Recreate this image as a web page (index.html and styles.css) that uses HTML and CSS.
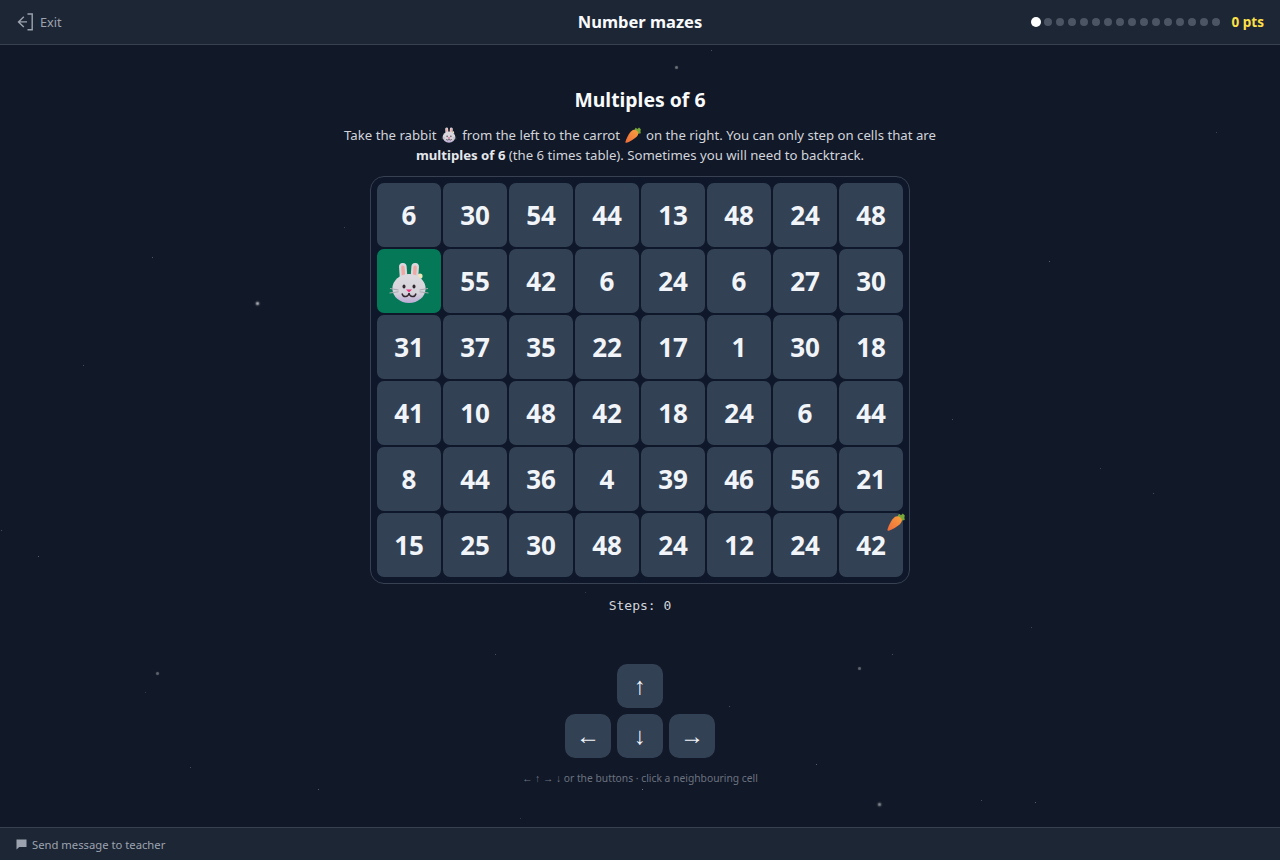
FILE: index.html
```html
<!DOCTYPE html>
<html lang="en">
<head>
<meta charset="utf-8">
<title>Number mazes</title>
<link rel="stylesheet" href="styles.css">
</head>
<body>
<svg class="defs" width="0" height="0" aria-hidden="true">
  <defs>
    <linearGradient id="face" x1="0" y1="0" x2="0" y2="1">
      <stop offset="0" stop-color="#dddbe0"/>
      <stop offset=".65" stop-color="#d6d3da"/>
      <stop offset="1" stop-color="#bcaad6"/>
    </linearGradient>
    <linearGradient id="root" x1="0" y1="1" x2="1" y2="0">
      <stop offset="0" stop-color="#ee6a3a"/>
      <stop offset="1" stop-color="#f8a03f"/>
    </linearGradient>
    <symbol id="rabbit" viewBox="0 0 40 42">
      <circle cx="31" cy="14" r="2.6" fill="#f1e6b8"/>
      <rect x="10.400" y="1" width="7.6" height="19" rx="3.8" fill="#dad8de" transform="rotate(-4 14 10)"/>
      <rect x="22" y="1" width="7.6" height="19" rx="3.8" fill="#dad8de" transform="rotate(4 26 10)"/>
      <rect x="12.500" y="3.600" width="3.4" height="14" rx="1.7" fill="#f0a8a2" transform="rotate(-4 14 10)"/>
      <rect x="24.100" y="3.600" width="3.4" height="14" rx="1.7" fill="#f0a8a2" transform="rotate(4 26 10)"/>
      <ellipse cx="20" cy="26.500" rx="16.600" ry="14.600" fill="url(#face)"/>
      <path d="M1 26.500l8.500 1.500M.5 31l9-1.200M39 26.500l-8.500 1.500M39.500 31l-9-1.200" stroke="#a9a8b2" stroke-width="1" fill="none"/>
      <ellipse cx="15" cy="24.500" rx="1.500" ry="2.100" fill="#33272e"/>
      <ellipse cx="25" cy="24.500" rx="1.500" ry="2.100" fill="#33272e"/>
      <path d="M17 27.600h6l-3 3z" fill="#ee2f7c"/>
      <path d="M13 31.500q1 3.600 4 3q2.600-.4 3-3.500q.4 3.100 3 3.500q3 .6 4-3" fill="none" stroke="#33272e" stroke-width="1.500"/>
    </symbol>
    <symbol id="carrot" viewBox="0 0 18 18">
      <path d="M10.500 3.500 12 .8l2 1.400L15.800.6l2 1.900-.4 2.300.4 2.200-2.500.6L12 8z" fill="#77a63a"/>
      <path d="M8 3.800C10.200 2.400 13.500 3.600 14.600 6 15.400 8 14.400 9.800 12.800 11.300 9.800 14 4.600 17 1.800 17.800 .8 18 .3 17.500.5 16.500 1.200 13.500 4.600 6.300 8 3.800Z" fill="url(#root)"/>
    </symbol>
  </defs>
</svg>
<div class="stars"></div>
<div class="app">
  <header class="topbar">
    <div class="exit">
      <svg class="exit-icon" width="17" height="18" viewBox="0 0 17 18" fill="none" stroke="currentColor" stroke-width="1.4"><path d="M11.500 1h4.700v15.800h-4.700"/><path d="M11 8.900H2.500M7.800 3.800 2.500 8.900l5.300 5.100"/></svg>
      <span>Exit</span>
    </div>
    <div class="title">Number mazes</div>
    <div class="progress">
      <div class="dots">
        <i class="dot now"></i><i class="dot"></i><i class="dot"></i><i class="dot"></i><i class="dot"></i><i class="dot"></i><i class="dot"></i><i class="dot"></i><i class="dot"></i><i class="dot"></i><i class="dot"></i><i class="dot"></i><i class="dot"></i><i class="dot"></i><i class="dot"></i><i class="dot"></i>
      </div>
      <span class="pts">0 pts</span>
    </div>
  </header>
  <main class="main">
    <h1>Multiples of 6</h1>
    <p class="lead">Take the rabbit <svg class="inline-icon" aria-label="rabbit"><use href="#rabbit"/></svg> from the left to the carrot <svg class="inline-icon" aria-label="carrot"><use href="#carrot"/></svg> on the right. You can only step on cells that are <b>multiples of 6</b> (the 6 times table). Sometimes you will need to backtrack.</p>
    <div class="board">
      <div class="cell">6</div><div class="cell">30</div><div class="cell">54</div><div class="cell">44</div><div class="cell">13</div><div class="cell">48</div><div class="cell">24</div><div class="cell">48</div>
      <div class="cell start"><svg class="rabbit" aria-label="rabbit"><use href="#rabbit"/></svg></div><div class="cell">55</div><div class="cell">42</div><div class="cell">6</div><div class="cell">24</div><div class="cell">6</div><div class="cell">27</div><div class="cell">30</div>
      <div class="cell">31</div><div class="cell">37</div><div class="cell">35</div><div class="cell">22</div><div class="cell">17</div><div class="cell">1</div><div class="cell">30</div><div class="cell">18</div>
      <div class="cell">41</div><div class="cell">10</div><div class="cell">48</div><div class="cell">42</div><div class="cell">18</div><div class="cell">24</div><div class="cell">6</div><div class="cell">44</div>
      <div class="cell">8</div><div class="cell">44</div><div class="cell">36</div><div class="cell">4</div><div class="cell">39</div><div class="cell">46</div><div class="cell">56</div><div class="cell">21</div>
      <div class="cell">15</div><div class="cell">25</div><div class="cell">30</div><div class="cell">48</div><div class="cell">24</div><div class="cell">12</div><div class="cell">24</div><div class="cell goal">42<svg class="carrot" aria-label="carrot"><use href="#carrot"/></svg></div>
    </div>
    <div class="steps">Steps: 0</div>
    <div class="pad">
      <button class="key k-up">↑</button>
      <button class="key k-left">←</button>
      <button class="key k-down">↓</button>
      <button class="key k-right">→</button>
    </div>
    <p class="hint">← ↑ → ↓ or the buttons · click a neighbouring cell</p>
  </main>
  <footer class="footer">
    <svg width="11" height="11" viewBox="0 0 11 11" fill="currentColor"><path d="M0.5 0.5h10v7.6H3.2L0.5 10.5z"/></svg>
    <span>Send message to teacher</span>
  </footer>
</div>
</body>
</html>
```
FILE: styles.css
```css
* { box-sizing: border-box; }
html, body { margin: 0; height: 100%; }
body {
  background: #111827;
  color: #e2e8f0;
  font-family: "Noto Sans", "Liberation Sans", sans-serif;
  overflow: hidden;
  position: relative;
}
.defs { position: absolute; }
.stars {
  position: absolute;
  left: 0; top: 0;
  width: 1px; height: 1px;
  border-radius: 50%;
  background: transparent;
  box-shadow:
    676px 67px 1px 1px rgba(255,255,255,.4),
    257px 303px 2px 1px rgba(255,255,255,.85),
    157px 673px 1px 1px rgba(255,255,255,.35),
    859px 668px 1px 1px rgba(255,255,255,.35),
    879px 804px 2px 1px rgba(255,255,255,.65),
    711px 50px 0 0 rgba(255,255,255,.3),
    152px 257px 0 0 rgba(255,255,255,.35),
    344px 227px 0 0 rgba(255,255,255,.25),
    83px 365px 0 0 rgba(255,255,255,.3),
    1049px 261px 0 0 rgba(255,255,255,.4),
    1216px 132px 0 0 rgba(255,255,255,.25),
    1100px 468px 0 0 rgba(255,255,255,.25),
    1153px 493px 0 0 rgba(255,255,255,.3),
    952px 419px 0 0 rgba(255,255,255,.3),
    1px 530px 0 0 rgba(255,255,255,.3),
    38px 556px 0 0 rgba(255,255,255,.4),
    145px 692px 0 0 rgba(255,255,255,.2),
    1031px 627px 0 0 rgba(255,255,255,.25),
    892px 654px 0 0 rgba(255,255,255,.3),
    495px 654px 0 0 rgba(255,255,255,.3),
    585px 592px 0 0 rgba(255,255,255,.2),
    729px 706px 0 0 rgba(255,255,255,.3),
    816px 764px 0 0 rgba(255,255,255,.4),
    190px 767px 0 0 rgba(255,255,255,.3),
    318px 789px 0 0 rgba(255,255,255,.4),
    642px 789px 0 0 rgba(255,255,255,.5),
    520px 818px 0 0 rgba(255,255,255,.2),
    981px 800px 0 0 rgba(255,255,255,.3),
    1035px 802px 0 0 rgba(255,255,255,.4);
}
.app {
  position: relative;
  height: 860px;
  display: flex;
  flex-direction: column;
}
.topbar {
  height: 45px;
  flex: none;
  display: flex;
  align-items: center;
  justify-content: space-between;
  padding: 0 16px;
  background: #1d2635;
  border-bottom: 1px solid #374151;
  position: relative;
}
.exit {
  display: flex;
  align-items: center;
  gap: 7px;
  font-size: 12.7px;
  color: #9ca3af;
}
.title {
  position: absolute;
  left: 0; right: 0;
  padding-bottom: 1px;
  text-align: center;
  font-size: 16.5px;
  font-weight: 700;
  color: #f8fafc;
}
.progress { display: flex; align-items: center; gap: 12px; position: relative; }
.dots { display: flex; align-items: center; gap: 4px; }
.dot { width: 8px; height: 8px; border-radius: 50%; background: #4b5563; }
.dot.now { width: 10px; height: 10px; background: #fff; margin-right: -1px; }
.pts { font-size: 13.5px; font-weight: 700; color: #fde047; }
.main {
  flex: 1;
  display: flex;
  flex-direction: column;
  align-items: center;
  padding-top: 43px;
}
h1 {
  margin: 0;
  font-size: 19.4px;
  line-height: 24px;
  font-weight: 700;
  color: #f8fafc;
}
.lead {
  width: 620px;
  margin: 13px 0 0;
  font-size: 13.2px;
  line-height: 20px;
  text-align: center;
  color: #d1d5db;
}
.lead b { color: #e5e7eb; }
.inline-icon {
  width: 16px;
  height: 16px;
  margin: 0 1.5px;
  vertical-align: -3px;
}
.board {
  margin-top: 11px;
  padding: 6px;
  width: 540px;
  display: grid;
  grid-template-columns: repeat(8, 64px);
  grid-auto-rows: 64px;
  gap: 2px;
  border: 1px solid #374151;
  border-radius: 14px;
  background: #0f172a;
}
.cell {
  position: relative;
  display: flex;
  align-items: center;
  justify-content: center;
  background: #334155;
  border-radius: 7px;
  font-size: 26px;
  font-weight: 700;
  color: #f1f5f9;
}
.cell.start { background: #047857; }
.rabbit { width: 40px; height: 42px; margin-top: 3px; }
.carrot {
  position: absolute;
  right: -2px;
  top: 0;
  width: 18px;
  height: 18px;
}
.steps {
  margin-top: 14px;
  font-family: "DejaVu Sans Mono", monospace;
  font-size: 13px;
  line-height: 16px;
  color: #d1d5db;
}
.pad {
  margin-top: 50px;
  display: grid;
  grid-template-columns: repeat(3, 46px);
  grid-template-rows: 44px 44px;
  gap: 6px;
}
.key {
  border: 0;
  padding: 0;
  border-radius: 10px;
  background: #334155;
  color: #f1f5f9;
  font-family: "Liberation Sans", sans-serif;
  font-size: 24px;
  line-height: 1;
}
.k-up { grid-column: 2; grid-row: 1; }
.k-left { grid-column: 1; grid-row: 2; }
.k-down { grid-column: 2; grid-row: 2; }
.k-right { grid-column: 3; grid-row: 2; }
.hint {
  margin: 12px 0 0;
  font-size: 10.3px;
  line-height: 16px;
  color: #6b7280;
}
.footer {
  height: 33px;
  flex: none;
  display: flex;
  align-items: center;
  gap: 5px;
  padding: 0 16px;
  background: #1c2635;
  border-top: 1px solid #374151;
  font-size: 11.25px;
  color: #9ca3af;
}
```
